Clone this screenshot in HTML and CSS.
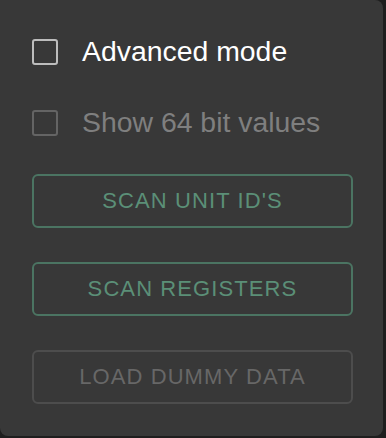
FILE: index.html
```html
<!DOCTYPE html>
<html lang="en">
<head>
  <meta charset="UTF-8">
  <meta name="viewport" content="width=device-width, initial-scale=1.0">
  <title>Scanner settings</title>
  <link rel="stylesheet" href="styles.css">
</head>
<body>
  <section class="panel">
    <label class="checkRow">
      <span class="checkBox"></span>
      <span class="checkLabel">Advanced mode</span>
    </label>
    <label class="checkRow isDisabled">
      <span class="checkBox"></span>
      <span class="checkLabel">Show 64 bit values</span>
    </label>

    <div class="actions">
      <button class="actionButton">SCAN UNIT ID'S</button>
      <button class="actionButton">SCAN REGISTERS</button>
      <button class="actionButton" disabled>LOAD DUMMY DATA</button>
    </div>
  </section>
</body>
</html>
```

FILE: styles.css
```css
* {
  box-sizing: border-box;
  margin: 0;
  padding: 0;
}
body {
  background-color: #1e1e1e;
  font-family: "Liberation Sans", Arial, sans-serif;
  width: 386px;
  height: 438px;
  overflow: hidden;
}

.panel {
  width: 383px;
  height: 436px;
  background-color: #383838;
  border-radius: 0 8px 8px 8px;
  padding: 28px 30px 0 32px;
  display: flex;
  flex-direction: column;
}

.checkRow {
  display: flex;
  align-items: center;
  gap: 24px;
  height: 47px;
  margin-bottom: 24px;
  cursor: pointer;
}
.checkBox {
  width: 26px;
  height: 26px;
  border: 2px solid #bdbdbd;
  border-radius: 3px;
  flex-shrink: 0;
}
.checkLabel {
  font-size: 28.4px;
  color: #ffffff;
}
.checkRow.isDisabled .checkBox {
  border-color: #646464;
}
.checkRow.isDisabled .checkLabel {
  color: #7f7f7f;
}

.actions {
  display: flex;
  flex-direction: column;
  gap: 34px;
  margin-top: 4px;
}
.actionButton {
  width: 321px;
  height: 54px;
  background: transparent;
  border: 2px solid #4b7462;
  border-radius: 6px;
  color: #5b8f77;
  font-family: inherit;
  font-size: 22px;
  letter-spacing: 1.1px;
  cursor: pointer;
}
.actionButton:disabled {
  border-color: #4d4d4d;
  color: #676767;
  cursor: default;
}
```
